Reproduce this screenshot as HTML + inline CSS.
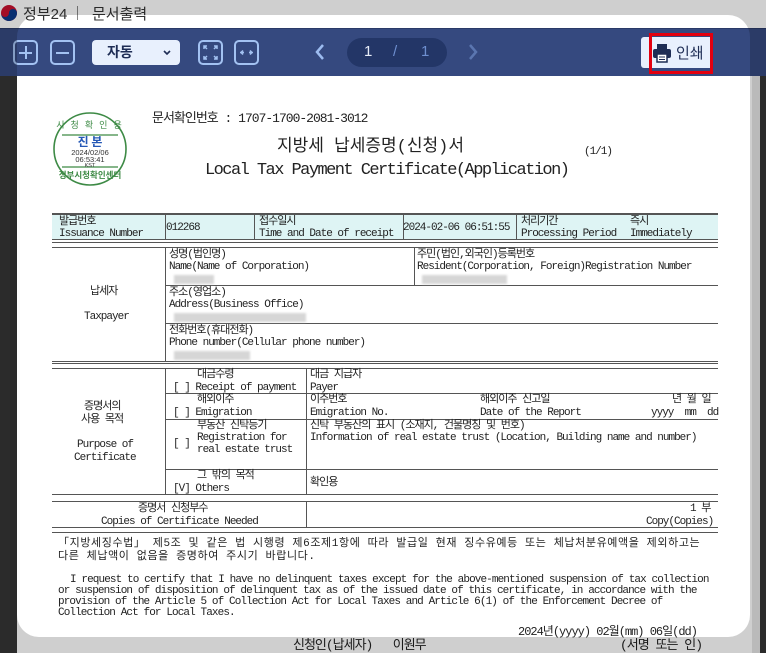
<!DOCTYPE html>
<html><head><meta charset="utf-8"><style>
*{margin:0;padding:0;box-sizing:border-box}
body{width:766px;height:653px;overflow:hidden;position:relative;background:#fff;font-family:"Liberation Mono","Noto Sans CJK KR",monospace;color:#111}
.a{position:absolute}
.t{position:absolute;font-size:11px;line-height:13px;letter-spacing:-1px;white-space:pre;color:#222;padding-top:2px}
.h{position:absolute;left:52px;width:666px;height:1px;background:#555}
.v{position:absolute;width:1px;background:#555}
.ib{position:absolute;top:40px;width:25px;height:25px;border:2px solid #a3c2f2;border-radius:5px}
.blur{position:absolute;height:9px;background:#d6d6d6;filter:blur(1px)}
.k{font-family:"Liberation Sans","Noto Sans CJK KR",sans-serif}
</style></head><body>
<svg class="a" style="left:0;top:2px" width="18" height="22" viewBox="0 0 18 22"><circle cx="9" cy="11" r="8" fill="#c8102e"/><path d="M1 11a8 8 0 0 0 16 0a4 4 0 0 0-8 0a4 4 0 0 1-8 0z" fill="#0b3a8c"/></svg>
<div class="a k" style="left:23px;top:3px;font-size:15px;color:#333">정부24</div>
<div class="a" style="left:77px;top:6px;width:1px;height:14px;background:#888"></div>
<div class="a k" style="left:92px;top:3px;font-size:15px;color:#333">문서출력</div>
<div class="a" style="left:0;top:28px;width:766px;height:48px;background:#35497f;border-top:1px solid #2a3a68"></div>
<div class="a" style="left:0;top:76px;width:766px;height:577px;background:#363636"></div>
<div class="a" style="left:752px;top:76px;width:8px;height:577px;background:#e6e6e6"></div>
<div class="a" style="left:17px;top:76px;width:735px;height:577px;background:#fff"></div>
<div class="ib" style="left:13px"><div class="a" style="left:4px;top:9.5px;width:13px;height:2px;background:#a3c2f2"></div><div class="a" style="left:9.5px;top:4px;width:2px;height:13px;background:#a3c2f2"></div></div>
<div class="ib" style="left:50px"><div class="a" style="left:4px;top:9.5px;width:13px;height:2px;background:#a3c2f2"></div></div>
<div class="a k" style="left:92px;top:40px;width:88px;height:25px;background:#e8f0fd;border-radius:4px;font-size:14px;line-height:25px;padding-left:15px;color:#1e2d55;font-weight:bold">자동<svg class="a" style="left:71px;top:10px" width="8" height="6" viewBox="0 0 8 6"><path d="M1 1l3 3 3-3" stroke="#1e2d55" stroke-width="1.6" fill="none"/></svg></div>
<div class="ib" style="left:198px"><svg class="a" style="left:2px;top:2px" width="17" height="17" viewBox="0 0 17 17" stroke="#a3c2f2" stroke-width="1.5" fill="none"><path d="M2 5V2h3M12 2h3v3M15 12v3h-3M5 15H2v-3M2 2l3 3M15 2l-3 3M15 15l-3-3M2 15l3-3"/></svg></div>
<div class="ib" style="left:234px"><svg class="a" style="left:2px;top:2px" width="17" height="17" viewBox="0 0 17 17" stroke="#a3c2f2" stroke-width="1.5" fill="none"><path d="M2 8.5h4M5 6.5l-2 2 2 2M15 8.5h-4M12 6.5l2 2-2 2"/></svg></div>
<svg class="a" style="left:314px;top:43px" width="12" height="18" viewBox="0 0 12 18"><path d="M9 2L3 9l6 7" stroke="#9dbcf0" stroke-width="2.5" fill="none"/></svg>
<div class="a" style="left:347px;top:38px;width:100px;height:29px;background:#233667;border-radius:15px"></div>
<div class="a k" style="left:364px;top:43px;font-size:15px;color:#e6ecf8">1</div>
<div class="a k" style="left:393px;top:43px;font-size:15px;color:#6e8fd0">/</div>
<div class="a k" style="left:421px;top:43px;font-size:15px;color:#6e8fd0">1</div>
<svg class="a" style="left:467px;top:43px" width="12" height="18" viewBox="0 0 12 18"><path d="M3 2l6 7-6 7" stroke="#5b76b0" stroke-width="2.5" fill="none"/></svg>
<div class="a" style="left:641px;top:37px;width:72px;height:31px;background:#e8f0fd;border-radius:3px"></div>
<svg class="a" style="left:652px;top:43px" width="20" height="20" viewBox="0 0 20 20"><rect x="5" y="1" width="10" height="5" fill="#1e2d55"/><rect x="1" y="6" width="18" height="9" rx="2" fill="#1e2d55"/><rect x="5" y="11" width="10" height="8" fill="#fff" stroke="#1e2d55" stroke-width="1.5"/><path d="M7 14h6M7 16.5h6" stroke="#1e2d55"/></svg>
<div class="a k" style="left:676px;top:42px;font-size:15px;color:#1e2d55">인쇄</div>
<div class="a" style="left:649px;top:33px;width:64px;height:41px;border:3px solid #e3000f"></div>
<svg class="a" style="left:50px;top:109px" width="80" height="80" viewBox="0 0 80 80">
<circle cx="40" cy="40" r="36" fill="#fff" stroke="#3d8a45" stroke-width="1.6"/>
<path d="M12 26H68M12 58H68" stroke="#3d8a45" stroke-width="1.2"/>
<text x="40" y="19" text-anchor="middle" font-size="9" fill="#3d8a45" font-family="Noto Sans CJK KR,sans-serif" letter-spacing="2">시 청 확 인 용</text>
<text x="40" y="37" text-anchor="middle" font-size="12" font-weight="bold" fill="#2457b5" font-family="Noto Sans CJK KR,sans-serif">진 본</text>
<text x="40" y="46" text-anchor="middle" font-size="7.5" fill="#333" font-family="Liberation Sans,sans-serif">2024/02/06</text>
<text x="40" y="53" text-anchor="middle" font-size="7.5" fill="#333" font-family="Liberation Sans,sans-serif">06:53:41</text>
<text x="40" y="58" text-anchor="middle" font-size="5.5" fill="#333" font-family="Liberation Sans,sans-serif">KST</text>
<text x="40" y="69" text-anchor="middle" font-size="8.5" fill="#3d8a45" font-family="Noto Sans CJK KR,sans-serif" font-weight="bold">정부시청확인센터</text>
</svg>
<div class="t" style="left:152px;top:109px;font-size:13px;line-height:16px">문서확인번호 : 1707-1700-2081-3012</div>
<div class="t" style="left:277px;top:136px;font-size:17px;line-height:20px;letter-spacing:0">지방세 납세증명(신청)서</div>
<div class="t" style="left:584px;top:144px;font-size:11px">(1/1)</div>
<div class="t" style="left:205px;top:158px;font-size:17px;line-height:22px;letter-spacing:-1.55px">Local Tax Payment Certificate(Application)</div>
<div class="a" style="left:52px;top:214px;width:666px;height:25px;background:#def4f4"></div>
<div class="h" style="top:213px;height:2px"></div><div class="h" style="top:239px"></div><div class="h" style="top:242px"></div>
<div class="v" style="left:165px;top:214px;height:25px"></div><div class="v" style="left:254px;top:214px;height:25px"></div><div class="v" style="left:403px;top:214px;height:25px"></div><div class="v" style="left:516px;top:214px;height:25px"></div>
<div class="t" style="left:59px;top:214px">발급번호</div><div class="t" style="left:59px;top:226px">Issuance Number</div>
<div class="t" style="left:166px;top:220px">012268</div>
<div class="t" style="left:259px;top:214px">접수일시</div><div class="t" style="left:259px;top:226px">Time and Date of receipt</div>
<div class="t" style="left:403px;top:220px">2024-02-06 06:51:55</div>
<div class="t" style="left:521px;top:214px">처리기간</div><div class="t" style="left:521px;top:226px">Processing Period</div>
<div class="t" style="left:630px;top:214px">즉시</div><div class="t" style="left:630px;top:226px">Immediately</div>
<div class="h" style="top:247px"></div><div class="h" style="top:361px"></div><div class="h" style="top:363px"></div>
<div class="a" style="left:165px;top:285px;width:553px;height:1px;background:#555"></div>
<div class="a" style="left:165px;top:323px;width:553px;height:1px;background:#555"></div>
<div class="v" style="left:165px;top:247px;height:114px"></div><div class="v" style="left:414px;top:247px;height:38px"></div>
<div class="t" style="left:90px;top:284px">납세자</div><div class="t" style="left:84px;top:309px">Taxpayer</div>
<div class="t" style="left:169px;top:247px">성명(법인명)</div><div class="t" style="left:169px;top:259px">Name(Name of Corporation)</div><div class="blur" style="left:174px;top:275px;width:40px"></div>
<div class="t" style="left:417px;top:247px">주민(법인,외국인)등록번호</div><div class="t" style="left:417px;top:259px">Resident(Corporation, Foreign)Registration Number</div><div class="blur" style="left:422px;top:275px;width:85px"></div>
<div class="t" style="left:169px;top:285px">주소(영업소)</div><div class="t" style="left:169px;top:297px">Address(Business Office)</div><div class="blur" style="left:174px;top:313px;width:132px"></div>
<div class="t" style="left:169px;top:323px">전화번호(휴대전화)</div><div class="t" style="left:169px;top:335px">Phone number(Cellular phone number)</div><div class="blur" style="left:174px;top:351px;width:76px"></div>
<div class="h" style="top:368px"></div><div class="h" style="top:494px"></div>
<div class="a" style="left:165px;top:393px;width:553px;height:1px;background:#555"></div>
<div class="a" style="left:165px;top:419px;width:553px;height:1px;background:#555"></div>
<div class="a" style="left:165px;top:469px;width:553px;height:1px;background:#555"></div>
<div class="v" style="left:165px;top:368px;height:126px"></div><div class="v" style="left:306px;top:368px;height:126px"></div>
<div class="t" style="left:84px;top:399px">증명서의</div><div class="t" style="left:81px;top:412px">사용 목적</div>
<div class="t" style="left:77px;top:437px">Purpose of</div><div class="t" style="left:74px;top:450px">Certificate</div>
<div class="t" style="left:197px;top:367px">대금수령</div><div class="t" style="left:173px;top:380px">[ ] Receipt of payment</div>
<div class="t" style="left:310px;top:367px">대금 지급자</div><div class="t" style="left:310px;top:380px">Payer</div>
<div class="t" style="left:197px;top:392px">해외이주</div><div class="t" style="left:173px;top:405px">[ ] Emigration</div>
<div class="t" style="left:310px;top:392px">이주번호</div><div class="t" style="left:310px;top:405px">Emigration No.</div>
<div class="t" style="left:480px;top:392px">해외이주 신고일</div><div class="t" style="left:480px;top:405px">Date of the Report</div>
<div class="t" style="left:672px;top:392px">년 월 일</div><div class="t" style="left:651px;top:405px">yyyy  mm  dd</div>
<div class="t" style="left:197px;top:418px">부동산 신탁등기</div><div class="t" style="left:197px;top:430px">Registration for</div><div class="t" style="left:197px;top:442px">real estate trust</div>
<div class="t" style="left:173px;top:436px">[ ]</div>
<div class="t" style="left:310px;top:418px">신탁 부동산의 표시 (소재지, 건물명칭 및 번호)</div><div class="t" style="left:310px;top:430px">Information of real estate trust (Location, Building name and number)</div>
<div class="t" style="left:197px;top:468px">그 밖의 목적</div><div class="t" style="left:173px;top:481px">[V] Others</div>
<div class="t" style="left:310px;top:475px">확인용</div>
<div class="h" style="top:501px"></div><div class="h" style="top:527px"></div><div class="h" style="top:532px"></div>
<div class="v" style="left:306px;top:501px;height:26px"></div>
<div class="t" style="left:138px;top:501px">증명서 신청부수</div><div class="t" style="left:101px;top:514px">Copies of Certificate Needed</div>
<div class="t" style="left:690px;top:501px">1 부</div><div class="t" style="left:646px;top:514px">Copy(Copies)</div>
<div class="t" style="left:58px;top:536px;letter-spacing:0.6px">「지방세징수법」 제5조 및 같은 법 시행령 제6조제1항에 따라 발급일 현재 징수유예등 또는 체납처분유예액을 제외하고는</div>
<div class="t" style="left:58px;top:549px;letter-spacing:0.6px">다른 체납액이 없음을 증명하여 주시기 바랍니다.</div>
<div class="t" style="left:70px;top:572px;letter-spacing:-0.9px">I request to certify that I have no delinquent taxes except for the above-mentioned suspension of tax collection</div>
<div class="t" style="left:58px;top:583px;letter-spacing:-0.9px">or suspension of disposition of delinquent tax as of the issued date of this certificate, in accordance with the</div>
<div class="t" style="left:58px;top:594px;letter-spacing:-0.9px">provision of the Article 5 of Collection Act for Local Taxes and Article 6(1) of the Enforcement Decree of</div>
<div class="t" style="left:58px;top:605px;letter-spacing:-0.9px">Collection Act for Local Taxes.</div>
<div class="t" style="left:518px;top:624px;font-size:12px">2024년(yyyy) 02월(mm) 06일(dd)</div>
<div class="t" style="left:293px;top:637px;font-size:13px">신청인(납세자)   이원무</div>
<div class="t" style="left:620px;top:637px;font-size:13px">(서명 또는 인)</div>
<div class="a" style="left:17px;top:15px;width:733px;height:622px;border-radius:22px;box-shadow:0 0 0 1500px rgba(0,0,0,0.19)"></div>
</body></html>
